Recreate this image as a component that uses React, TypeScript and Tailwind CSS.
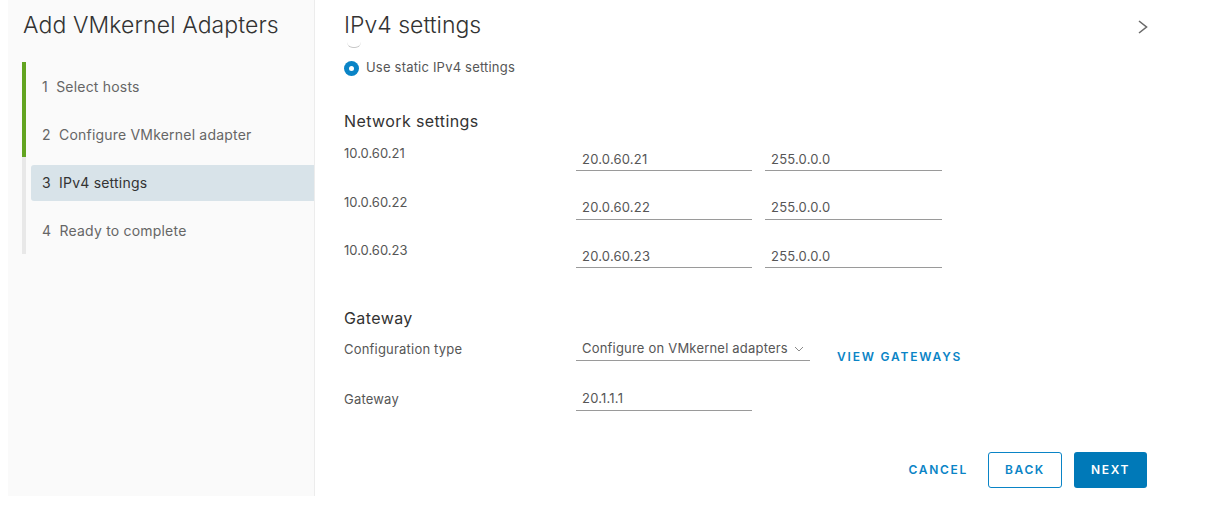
import React from "react";

const font = { fontFamily: "Inter, 'Open Sans', sans-serif" };

function Step({ n, label, active }: { n: number; label: string; active?: boolean }) {
  return (
    <div className="h-[48px] flex items-center pt-[1px]">
      <div
        className={`h-[36px] flex-1 flex items-center pl-[11px] ml-[5px] rounded-l-[3px] text-[14px] tracking-[0.2px] whitespace-pre ${
          active ? "bg-[#d8e3e9] text-[#333]" : "text-[#666]"
        }`}
      >
        {`${n}  ${label}`}
      </div>
    </div>
  );
}

function Field({ value, w }: { value: string; w: string }) {
  return (
    <div className={`${w} h-[26px] border-b border-[#9a9a9a] pl-[6px] pt-[4px] text-[13px] tracking-[0.2px] text-[#565656] flex items-center`}>
      {value}
    </div>
  );
}

export default function App() {
  const rows = [
    ["10.0.60.21", "20.0.60.21"],
    ["10.0.60.22", "20.0.60.22"],
    ["10.0.60.23", "20.0.60.23"],
  ];
  return (
    <div className="w-[1212px] h-[507px] bg-white flex" style={font}>
      <div className="ml-[8px] w-[307px] h-[496px] bg-[#fafafa] border-r border-[#ececec] flex flex-col shrink-0">
        <div className="pl-[15px] pt-[10px] text-[23px] font-light text-[#333] leading-[30px] tracking-[0.1px]">
          Add VMkernel Adapters
        </div>
        <div className="ml-[14px] mt-[22px] border-l-[4px] border-[#e8e8e8] relative">
          <div className="absolute -left-[4px] top-0 w-[4px] h-[95px] bg-[#62a420]" />
          <Step n={1} label="Select hosts" />
          <Step n={2} label="Configure VMkernel adapter" />
          <Step n={3} label="IPv4 settings" active />
          <Step n={4} label="Ready to complete" />
        </div>
      </div>

      <div className="flex-1 flex flex-col pl-[29px] pr-[65px]">
        <div className="flex items-center justify-between h-[50px]">
          <div className="text-[23px] font-light text-[#333] leading-[30px]">IPv4 settings</div>
          <svg width="12" height="14" viewBox="0 0 12 14" className="mt-[3px] -mr-[2px]">
            <path d="M2 1 L9.5 7 L2 13" fill="none" stroke="#6a6a6a" strokeWidth="1.6" />
          </svg>
        </div>
        <div className="relative h-0">
          <div className="absolute left-[3px] -top-[8px] w-[14px] h-[6px] border-b border-[#c8c8c8] rounded-b-full" />
        </div>
        <div className="flex items-center mt-[10px] h-[16px]">
          <div className="w-[15px] h-[15px] rounded-full bg-[#0a84c6] flex items-center justify-center">
            <div className="w-[5px] h-[5px] rounded-full bg-white" />
          </div>
          <span className="ml-[7px] text-[13px] tracking-[0.2px] text-[#565656]">Use static IPv4 settings</span>
        </div>

        <div className="mt-[35px] text-[16px] tracking-[0.4px] text-[#333] leading-[20px]">Network settings</div>
        <div className="flex flex-col mt-[14px]">
          {rows.map(([l, v]) => (
            <div key={l} className="flex h-[48.5px]">
              <div className="w-[232px] text-[13px] text-[#565656] leading-[16px]">{l}</div>
              <div className="flex gap-[13px] items-start">
                <Field value={v} w="w-[176px]" />
                <Field value="255.0.0.0" w="w-[177px]" />
              </div>
            </div>
          ))}
        </div>

        <div className="mt-[17px] text-[16px] tracking-[0.4px] text-[#333] leading-[20px]">Gateway</div>
        <div className="flex items-start mt-[7px]">
          <div className="w-[232px] text-[13px] tracking-[0.2px] text-[#565656] leading-[16px] pt-[6px]">Configuration type</div>
          <div className="w-[234px] h-[26px] border-b border-[#9a9a9a] pl-[6px] pr-[6px] pt-[4px] text-[13px] tracking-[0.2px] text-[#565656] flex items-center justify-between">
            <span>Configure on VMkernel adapters</span>
            <svg width="10" height="6" viewBox="0 0 10 6">
              <path d="M1 1 L5 5 L9 1" fill="none" stroke="#8a8a8a" strokeWidth="1" />
            </svg>
          </div>
          <div className="ml-[27px] mt-[14px] h-[16px] leading-[16px] text-[12px] font-semibold tracking-[1.8px] text-[#0a84c6]">VIEW GATEWAYS</div>
        </div>
        <div className="flex items-start mt-[20px]">
          <div className="w-[232px] text-[13px] tracking-[0.2px] text-[#565656] leading-[16px] pt-[6px]">Gateway</div>
          <Field value="20.1.1.1" w="w-[176px]" />
        </div>

        <div className="flex justify-end items-center mt-[41px] gap-[12px]">
          <button className="h-[36px] px-[8px] text-[12px] font-semibold tracking-[1.7px] text-[#0a84c6]">CANCEL</button>
          <button className="h-[36px] w-[74px] border border-[#0a84c6] rounded-[3px] text-[12px] font-semibold tracking-[1.6px] text-[#0a84c6] bg-white">BACK</button>
          <button className="h-[36px] w-[73px] rounded-[3px] text-[12px] font-semibold tracking-[1.6px] text-white bg-[#0079b8]">NEXT</button>
        </div>
      </div>
    </div>
  );
}
